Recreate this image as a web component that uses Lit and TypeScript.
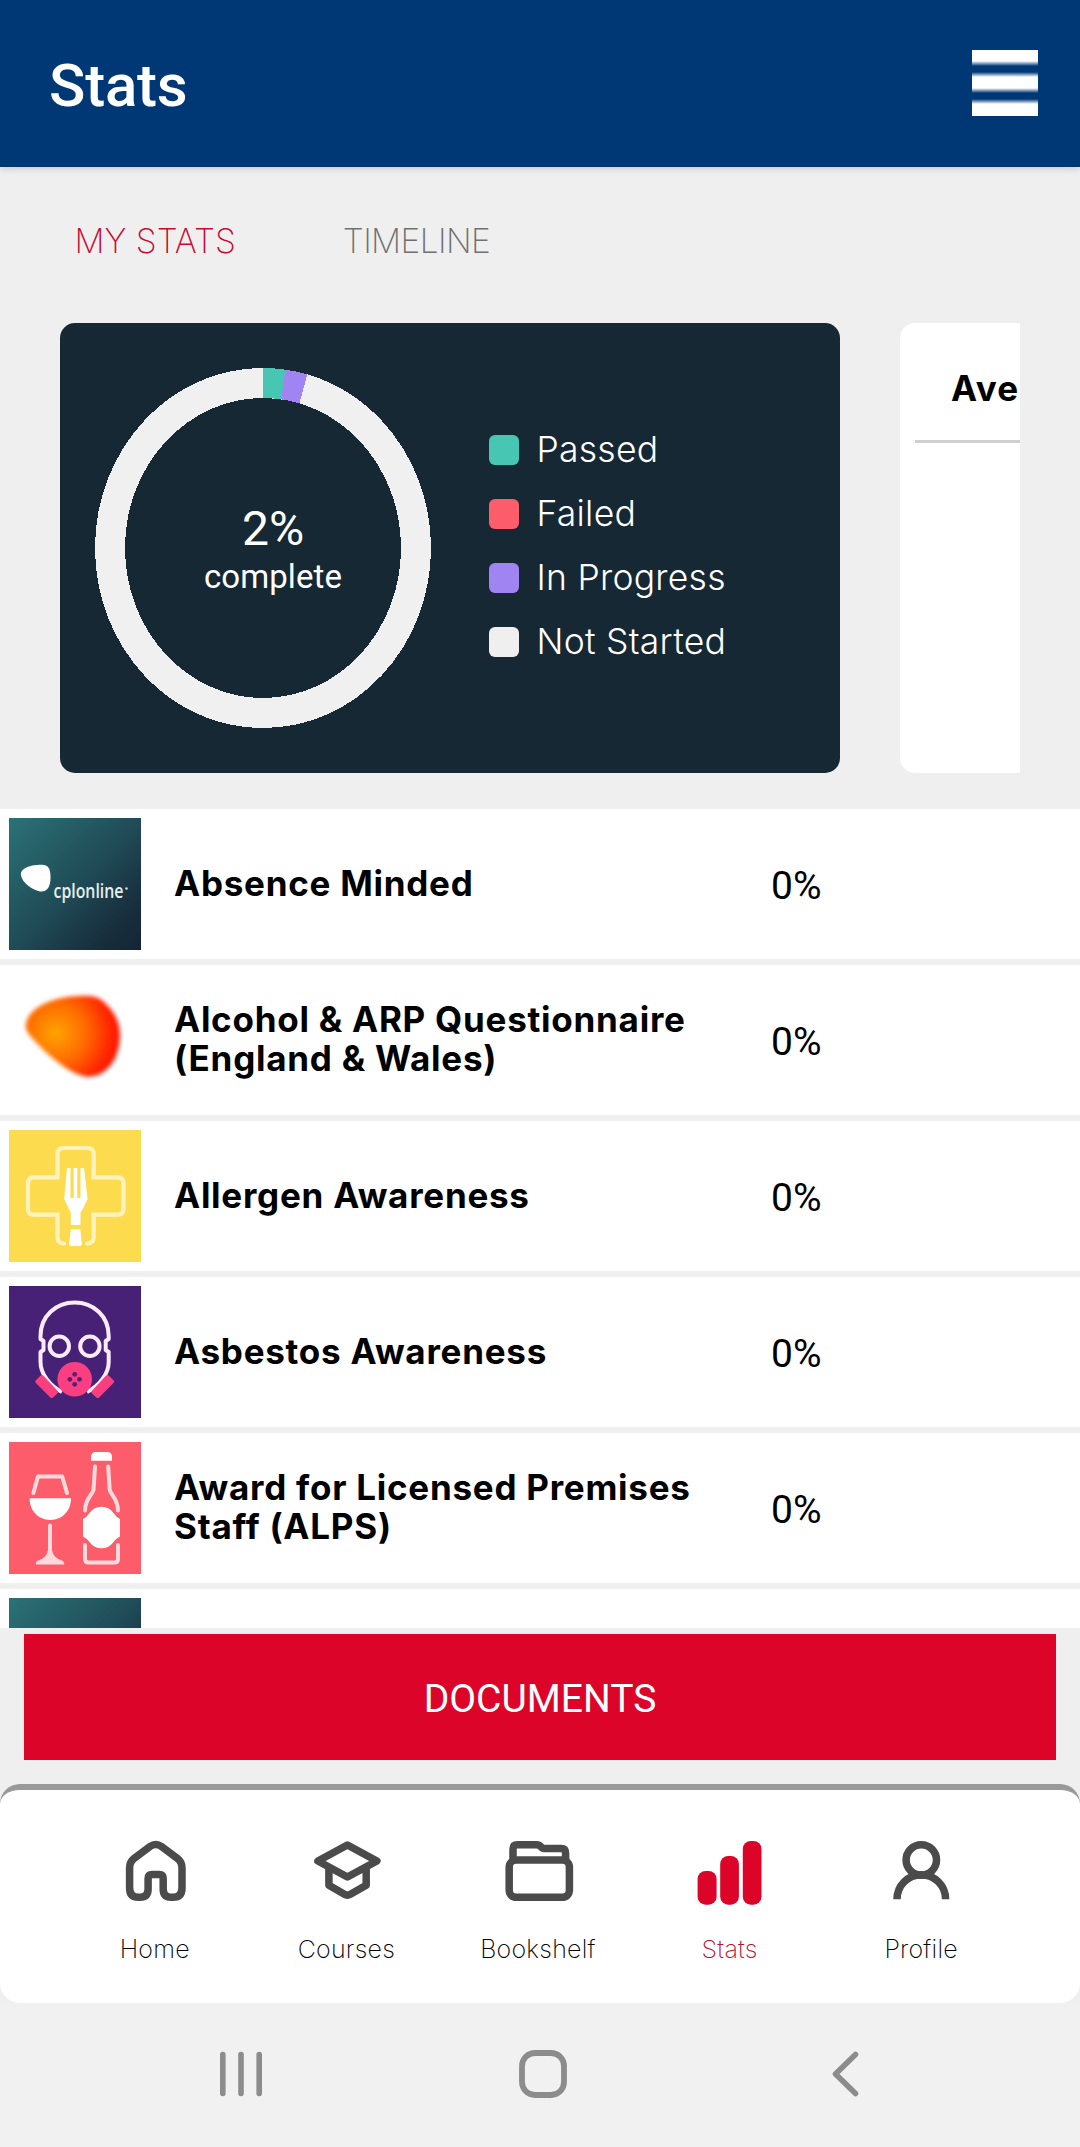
import { LitElement, html, svg, css, nothing } from "lit";
import { customElement, property } from "lit/decorators.js";
import { classMap } from "lit/directives/class-map.js";

type Point = [number, number];

interface Course {
  title: string;
  art: string;
  progress: number | null;
}

const COURSES: Course[] = [
  { title: "Absence Minded", art: "brand", progress: 0 },
  { title: "Alcohol & ARP Questionnaire (England & Wales)", art: "blob", progress: 0 },
  { title: "Allergen Awareness", art: "allergen", progress: 0 },
  { title: "Asbestos Awareness", art: "asbestos", progress: 0 },
  { title: "Award for Licensed Premises Staff (ALPS)", art: "alps", progress: 0 },
  { title: "", art: "plain", progress: null },
];

const LEGEND = [
  { label: "Passed", tone: "passed" },
  { label: "Failed", tone: "failed" },
  { label: "In Progress", tone: "progress" },
  { label: "Not Started", tone: "idle" },
];

const SLICES = [
  { share: 7.6, color: "#47c7b3" },
  { share: 7.7, color: "#a084f2" },
];

const TABS = [
  { id: "home", label: "Home" },
  { id: "courses", label: "Courses" },
  { id: "bookshelf", label: "Bookshelf" },
  { id: "stats", label: "Stats" },
  { id: "profile", label: "Profile" },
];

const gradient = svg`
  <defs>
    <linearGradient id="teal" x1="0" y1="0" x2="1" y2="1">
      <stop offset="0" stop-color="#2b7276" />
      <stop offset="0.5" stop-color="#204c57" />
      <stop offset="0.8" stop-color="#182f3e" />
      <stop offset="1" stop-color="#142533" />
    </linearGradient>
  </defs>
  <rect width="132" height="132" fill="url(#teal)" />`;

const ART: Record<string, unknown> = {
  plain: gradient,
  brand: svg`
    ${gradient}
    <path fill="#fff" d="M12 57C11 49 25 46.500 33 46.800C40 47 41.500 51.500 41.500 60C41.500 69 38 73.500 32.500 73.500C27 73.500 13 66 12 57Z" />
    <text class="brand" x="44.500" y="79.500" textLength="70" lengthAdjust="spacingAndGlyphs">cplonline</text>
    <circle cx="117.500" cy="70.500" r="1.300" fill="#cfdcdf" />`,
  blob: svg`
    <defs>
      <radialGradient id="ember" gradientUnits="userSpaceOnUse" cx="47" cy="59" r="62">
        <stop offset="0" stop-color="#ffa500" />
        <stop offset="0.5" stop-color="#ff6800" />
        <stop offset="0.900" stop-color="#ff2200" />
        <stop offset="1" stop-color="#ff1a05" />
      </radialGradient>
      <filter id="soft"><feGaussianBlur stdDeviation="2.200" /></filter>
    </defs>
    <path filter="url(#soft)" fill="url(#ember)" d="M17 50C19 34 44 22 72 22C84 21 92 24 98 31C106 39 111 49 111 61C111 74 107 86 100 93C92 102 81 105 71 101C58 97 38 81 24 65C19 59 16 56 17 50Z" />`,
  allergen: svg`
    <rect width="132" height="132" fill="#fddb4f" />
    <path fill="none" stroke="#fff3bd" stroke-width="4.200" stroke-linecap="round" d="M55 113.500Q48.500 113.500 48.500 107V84.700H25Q19 84.700 19 79V53Q19 47.300 25 47.300H48.500V24Q48.500 18 54.500 18H79Q84.700 18 84.700 24V47.300H108.500Q114.500 47.300 114.500 53V79Q114.500 84.700 108.500 84.700H84.700V107Q84.700 113.500 78 113.500" />
    <path fill="#fff" d="M58 38H61.500V68H64.700V38H68.300V68H71.500V38H75L78.600 69L73.500 79.500Q71.500 81.500 71.500 84V95H61.800V84Q61.800 81.500 60 79.500L55.200 69Z" />
    <path fill="#fff" d="M61.800 99.300H71.300L72.800 114Q72.800 116 71 116H62Q60 116 60 114Z" />`,
  asbestos: svg`
    <rect width="132" height="132" fill="#472176" />
    <path fill="none" stroke="#fbeaf8" stroke-width="4" stroke-linejoin="round" d="M53 106C41 100 31.500 88 31.500 76V66L34.500 64V55L31.500 53V50C31.500 30 47 16.500 65.700 16.500C84.400 16.500 99.700 30 99.700 50V53L96.700 55V64L99.700 66V76C99.700 88 90 100 78 106" />
    <g fill="none" stroke="#fbeaf8" stroke-width="4">
      <circle cx="50.300" cy="60.300" r="9.700" />
      <circle cx="80.900" cy="60.300" r="9.700" />
    </g>
    <g fill="#f93f7f" stroke="#f93f7f" stroke-width="4" stroke-linejoin="round">
      <path d="M33 91L28.300 95.700L42.700 110L47 106Z" />
      <path d="M98.400 91L103.100 95.700L88.700 110L84.400 106Z" />
    </g>
    <circle cx="65.700" cy="93.300" r="17.300" fill="#f93f7f" />
    <g fill="#5a1f72">
      <circle cx="65.700" cy="88.300" r="2.400" />
      <circle cx="60.900" cy="93.300" r="2.400" />
      <circle cx="70.500" cy="93.300" r="2.400" />
      <circle cx="65.700" cy="98.300" r="2.400" />
    </g>`,
  alps: svg`
    <rect width="132" height="132" fill="#fd5d6a" />
    <g fill="none" stroke="#ffdadd" stroke-width="4" stroke-linecap="round" stroke-linejoin="round">
      <path d="M24.400 51L29 34.500H53.200L58 51" />
      <path d="M41 83.500V114" />
      <path d="M86 24.500L84.500 48C83 53 76 57 76 68.500" />
      <path d="M99.200 24.500L100.700 48C102 53 109 57 109 68.500" />
      <path d="M76 103V117Q76 120.500 79.500 120.500H105.500Q109 120.500 109 117V103" />
    </g>
    <path fill="#ffdadd" d="M39 108H43Q44 116 54 119Q56 121 55 122.500H27Q26 121 28 119Q38 116 39 108Z" />
    <path fill="#fff" d="M20.600 56.300H62C62 69 53 78 41.300 78C29.500 78 20.600 69 20.600 56.300Z" />
    <path fill="#fff" d="M82 18.700V15Q82 10 87 10H98Q103 10 103 15V18.700Z" />
    <path fill="#fff" d="M74 77Q78 75 80.500 71Q85 64.700 92.500 64.700Q100 64.700 104.500 71Q107 75 111 77V94.500Q107 96.500 104.500 100Q100 106.300 92.500 106.300Q85 106.300 80.500 100Q78 96.500 74 94.500Z" />`,
};

const GLYPHS: Record<string, unknown> = {
  home: svg`<path d="M10.600 33Q10.600 27 15 23.500L31 11.500Q36.800 7.500 42.500 11.500L58.500 23.500Q63 27 63 33V53Q63 62.300 54 62.300H52Q44.200 62.300 44.200 54V43.500Q44.200 39.500 40.200 39.500H33.100Q29.100 39.500 29.100 43.500V54Q29.100 62.300 21 62.300H19.500Q10.600 62.300 10.600 53Z" />`,
  courses: svg`<g transform="translate(1.400 0)"><path d="M36 10L65.500 26L36 42L6.500 26Z" /><path d="M17.500 33V50.300L33 59.300Q36 61 39 59.300L54.800 50.300V33" /></g>`,
  bookshelf: svg`<g transform="translate(1.200 0)"><rect x="6" y="25" width="60.200" height="37.300" rx="7" /><path d="M9.800 24V14Q9.800 9.800 14 9.800H33.500Q36 9.800 37.500 11.500Q39 13.500 41.500 13.500H58Q62.400 13.500 62.400 18V24" /></g>`,
  stats: svg`<g class="solid"><rect x="3.600" y="36" width="19" height="33.700" rx="8" /><rect x="26.200" y="21" width="18.700" height="48.700" rx="8" /><rect x="48.800" y="6" width="18.700" height="63.700" rx="8" /></g>`,
  profile: svg`<circle cx="36.300" cy="25" r="15.200" /><path d="M12 64.200A24.300 24.500 0 0 1 60.600 64.200" />`,
};

@customElement("stats-donut")
class StatsDonut extends LitElement {
  @property({ type: Number }) percent = 0;

  static styles = css`
    :host {
      display: grid;
      width: 336px;
      height: 360px;
    }
    .ring,
    .caption {
      grid-area: 1 / 1;
    }
    .ring {
      display: block;
      shape-rendering: crispEdges;
    }
    .caption {
      display: flex;
      flex-direction: column;
      align-items: center;
      justify-content: center;
      padding: 9px 0 0 20px;
      color: #fff;
      line-height: 48px;
    }
    .value {
      font-size: 48px;
    }
    .note {
      font-size: 33px;
      letter-spacing: 0.1px;
    }
  `;

  private at(deg: number, rx: number, ry: number): Point {
    const a = (deg * Math.PI) / 180;
    return [168 + rx * Math.sin(a), 180 - ry * Math.cos(a)];
  }

  private slice(from: number, to: number) {
    const p = [this.at(from, 168, 180), this.at(to, 168, 180), this.at(to, 138, 150), this.at(from, 138, 150)];
    return `M${p[0]}A168 180 0 0 1 ${p[1]}L${p[2]}A138 150 0 0 0 ${p[3]}Z`;
  }

  render() {
    let angle = 0;
    return html`
      <svg class="ring" width="336" height="360" viewBox="0 0 336 360">
        <path
          fill="#f0f0f0"
          fill-rule="evenodd"
          d="M168 0A168 180 0 1 1 168 360A168 180 0 1 1 168 0ZM168 30A138 150 0 1 0 168 330A138 150 0 1 0 168 30Z"
        />
        ${SLICES.map((s) => {
          const from = angle;
          angle += s.share;
          return svg`<path fill=${s.color} d=${this.slice(from, angle)} />`;
        })}
      </svg>
      <div class="caption">
        <span class="value">${this.percent}%</span>
        <span class="note">complete</span>
      </div>
    `;
  }
}

@customElement("course-row")
class CourseRow extends LitElement {
  @property({ attribute: false }) course!: Course;

  static styles = css`
    :host {
      display: flex;
      flex: none;
      align-items: center;
      box-sizing: border-box;
      height: 150px;
      padding-left: 9px;
      background: #fff;
      color: #000;
    }
    .thumb {
      flex: none;
      width: 132px;
      height: 132px;
    }
    .brand {
      font: 600 19px "Open Sans", sans-serif;
      fill: #e6eef0;
    }
    .title {
      box-sizing: border-box;
      width: 597px;
      padding: 0 20px 3px 33px;
      font: 700 35px/39px Inter, sans-serif;
      letter-spacing: 0.75px;
    }
    .title::first-line {
      line-height: 40px;
    }
    .score {
      padding: 4px 0 0 33px;
      font-size: 39px;
      line-height: 48px;
    }
  `;

  render() {
    const { title, art, progress } = this.course;
    return html`
      <svg class="thumb" viewBox="0 0 132 132">${ART[art]}</svg>
      <div class="title">${title}</div>
      ${progress === null ? nothing : html`<div class="score">${progress}%</div>`}
    `;
  }
}

@customElement("app-root")
class AppRoot extends LitElement {
  static styles = css`
    :host {
      display: flex;
      flex-direction: column;
      width: 1080px;
      height: 2147px;
      overflow: hidden;
      background: #efefef;
      font-family: Roboto, sans-serif;
    }
    .header {
      display: flex;
      flex: none;
      align-items: center;
      justify-content: space-between;
      box-sizing: border-box;
      height: 167px;
      padding: 0 42px 0 49px;
      background: #003876;
      box-shadow: 0 1px 8px rgba(0, 0, 0, 0.18);
    }
    .heading {
      margin: 0;
      padding-top: 4px;
      color: #fff;
      font-size: 60px;
      font-weight: 500;
      line-height: 72px;
      letter-spacing: -0.2px;
    }
    .menu {
      width: 66px;
      height: 66px;
      margin-bottom: 2px;
      background: linear-gradient(
        #fff 0 11px,
        #003876 16px 22px,
        #fff 27px 38px,
        #003876 43px 49px,
        #fff 54px 66px
      );
    }
    .tabs {
      display: flex;
      flex: none;
      gap: 107px;
      height: 156px;
      box-sizing: border-box;
      padding: 50px 0 0 74.500px;
      color: #707070;
      font: 200 33.500px/48px Inter, sans-serif;
    }
    .tabs .on {
      color: #c8082f;
    }
    .tabs .other {
      letter-spacing: -0.6px;
    }
    .cards {
      display: flex;
      flex: none;
      gap: 60px;
      height: 450px;
      margin: 0 60px 36px;
      overflow: hidden;
    }
    .summary {
      display: flex;
      flex: none;
      align-items: center;
      gap: 58px;
      box-sizing: border-box;
      width: 780px;
      padding-left: 35px;
      border-radius: 15px;
      background: #152834;
    }
    .legend {
      display: flex;
      flex-direction: column;
      padding-bottom: 5px;
    }
    .key {
      display: flex;
      align-items: center;
      gap: 17.500px;
      height: 64px;
      color: #fff;
      font: 300 35.500px/64px Inter, sans-serif;
      letter-spacing: 0.25px;
    }
    .swatch {
      width: 30px;
      height: 30px;
      border-radius: 6px;
    }
    .passed {
      background: #47c7b3;
    }
    .failed {
      background: #fd5d6a;
    }
    .progress {
      background: #a084f2;
    }
    .idle {
      background: #efefef;
    }
    .average {
      flex: none;
      box-sizing: border-box;
      width: 780px;
      padding: 0 15px;
      border-radius: 15px;
      background: #fff;
    }
    .average-title {
      box-sizing: border-box;
      height: 120px;
      padding: 40px 0 0 36px;
      border-bottom: 3px solid #cfcfcf;
      color: #000;
      font: 700 35px/50px Inter, sans-serif;
      letter-spacing: 1.1px;
    }
    .list {
      display: flex;
      flex: none;
      flex-direction: column;
      gap: 6px;
      height: 819px;
      overflow: hidden;
    }
    .documents {
      display: flex;
      flex: none;
      align-items: center;
      justify-content: center;
      box-sizing: border-box;
      height: 126px;
      margin: 6px 24px 24px;
      padding-top: 3px;
      background: #dc0428;
      color: #fff;
      font-size: 39px;
      line-height: 48px;
    }
    .nav {
      display: flex;
      flex: none;
      box-sizing: border-box;
      height: 219px;
      padding: 45px 63px 0 59px;
      border-top: 6px solid #999;
      border-radius: 20px;
      background: #fff;
    }
    .item {
      display: flex;
      flex: 1;
      flex-direction: column;
      align-items: center;
      gap: 26px;
      color: #000;
      font: 200 25px/32px Inter, sans-serif;
      letter-spacing: 0.25px;
    }
    .item.on {
      color: #b8103a;
    }
    .glyph {
      width: 72px;
      height: 72px;
      fill: none;
      stroke: #4b4b4b;
      stroke-width: 7.5;
      stroke-linejoin: round;
    }
    .solid {
      fill: #dc0428;
      stroke: none;
    }
    .system {
      display: flex;
      flex: 1;
      background: #f1f1f1;
    }
    .system svg {
      display: block;
      width: 1080px;
      height: 144px;
      fill: none;
      stroke: #8c8c8c;
      stroke-linecap: round;
    }
  `;

  render() {
    return html`
      <header class="header">
        <h1 class="heading">Stats</h1>
        <div class="menu"></div>
      </header>
      <div class="tabs">
        <span class="on">MY STATS</span>
        <span class="other">TIMELINE</span>
      </div>
      <div class="cards">
        <section class="summary">
          <stats-donut .percent=${2}></stats-donut>
          <div class="legend">
            ${LEGEND.map(
              (k) => html`<div class="key"><i class=${classMap({ swatch: true, [k.tone]: true })}></i>${k.label}</div>`
            )}
          </div>
        </section>
        <section class="average">
          <div class="average-title">Ave</div>
        </section>
      </div>
      <div class="list">${COURSES.map((c) => html`<course-row .course=${c}></course-row>`)}</div>
      <div class="documents">DOCUMENTS</div>
      <nav class="nav">
        ${TABS.map(
          (t) => html`<div class=${classMap({ item: true, on: t.id === "stats" })}>
            <svg class="glyph" viewBox="0 0 72 72">${GLYPHS[t.id]}</svg>
            <span>${t.label}</span>
          </div>`
        )}
      </nav>
      <div class="system">
        <svg viewBox="0 0 1080 144">
          <path stroke-width="5.600" d="M222.800 51.500V90.500M241 51.500V90.500M259.200 51.500V90.500" />
          <rect stroke-width="5.800" x="522" y="50" width="42" height="42" rx="13" />
          <path stroke-width="5.600" stroke-linejoin="round" d="M855.500 51.500L835.500 71L855.500 90.500" />
        </svg>
      </div>
    `;
  }
}
